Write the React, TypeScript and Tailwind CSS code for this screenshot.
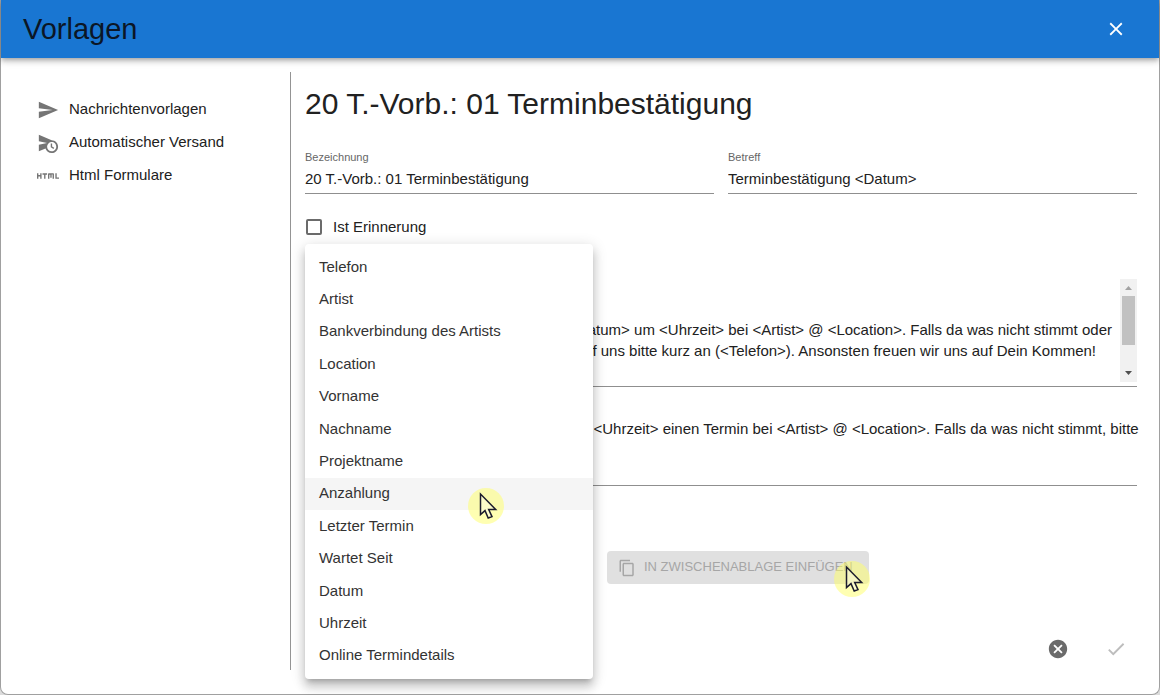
import React from "react";
import {
  MdCancel,
  MdCheck,
  MdClose,
  MdContentCopy,
  MdHtml,
  MdScheduleSend,
  MdSend,
} from "react-icons/md";

const placeholders = [
  "Telefon",
  "Artist",
  "Bankverbindung des Artists",
  "Location",
  "Vorname",
  "Nachname",
  "Projektname",
  "Anzahlung",
  "Letzter Termin",
  "Wartet Seit",
  "Datum",
  "Uhrzeit",
  "Online Termindetails",
];

const messageText =
  "Hallo <Vorname>,\n\nhiermit bestätige ich Deinen Termin am <Datum> um <Uhrzeit> bei <Artist> @ <Location>. Falls da was nicht stimmt oder Du diesen Termin nicht einhalten kannst, ruf uns bitte kurz an (<Telefon>). Ansonsten freuen wir uns auf Dein Kommen!\n\nBis bald\n\n<Artist>\n<Location>";

const smsText =
  "Hey <Vorname>, Du hast am <Datum> um <Uhrzeit> einen Termin bei <Artist> @ <Location>. Falls da was nicht stimmt, bitte kurz melden (<Telefon>).";

function Pointer() {
  return (
    <span className="block size-[36px] rounded-full bg-[#ffff66]/50">
      <svg viewBox="0 0 36 36" className="size-full" aria-hidden="true">
        <path
          d="M12.500 6V26.500L17 22.600L20.200 30L24 28.600L20.700 21.500H27.700Z"
          fill="#fff"
          fillOpacity="0.35"
          stroke="#1c1c2e"
          strokeWidth="1.5"
        />
      </svg>
    </span>
  );
}

function NavItem({ icon, children }: { icon: React.ReactNode; children: string }) {
  return (
    <a href="#" className="flex h-[33px] items-center gap-[10px] text-[#212121]">
      <span className="flex pt-[2px] text-[22px] text-[#757575]">{icon}</span>
      {children}
    </a>
  );
}

function TextField({ id, label, value }: { id: string; label: string; value: string }) {
  return (
    <div className="flex min-w-0 flex-1 flex-col">
      <label htmlFor={id} className="text-[11px] leading-4 text-[#666]">
        {label}
      </label>
      <input
        id={id}
        defaultValue={value}
        className="h-[29px] w-full border-b border-[#8f8f8f] bg-transparent pb-[2px] outline-none"
      />
    </div>
  );
}

function ScrollTrack() {
  return (
    <div className="flex h-[103px] w-[17px] shrink-0 flex-col items-center bg-[#f1f1f1]" aria-hidden="true">
      <svg viewBox="0 0 17 17" className="size-[17px]">
        <path d="M5 11h7L8.500 7z" fill="#a3a3a3" />
      </svg>
      <div className="h-[49px] w-[13px] bg-[#c1c1c1]" />
      <svg viewBox="0 0 17 17" className="mt-auto size-[17px]">
        <path d="M5 6h7L8.500 10z" fill="#505050" />
      </svg>
    </div>
  );
}

export default function App() {
  return (
    <div className="flex min-h-screen flex-col bg-[#dcdcdc] font-['Liberation_Sans',Arial,sans-serif] text-[15px] leading-[21px] text-[#212121]">
      <div className="flex flex-1 flex-col rounded-b-lg border-x border-b border-[#a0a0a0] bg-white">
        <header className="z-10 flex h-[58px] items-center justify-between bg-[#1976d2] pr-8 pl-[22px] shadow-[0_2px_4px_-1px_rgba(0,0,0,0.2),0_4px_5px_rgba(0,0,0,0.14),0_1px_10px_rgba(0,0,0,0.12)]">
          <h1 className="text-[29px] leading-[38px] text-[#0b1626]">Vorlagen</h1>
          <button type="button" aria-label="Schließen" className="text-[22px] text-white">
            <MdClose />
          </button>
        </header>

        <div className="flex flex-1 pt-[14px] pb-6">
          <nav className="flex w-[290px] shrink-0 flex-col border-r border-[#949494] pt-5 pl-9">
            <NavItem icon={<MdSend />}>Nachrichtenvorlagen</NavItem>
            <NavItem icon={<MdScheduleSend />}>Automatischer Versand</NavItem>
            <NavItem icon={<MdHtml />}>Html Formulare</NavItem>
          </nav>

          <main className="flex min-w-0 flex-1 flex-col pt-[13px] pr-[22px] pl-[14px]">
            <h2 className="text-[30px] leading-[38px]">20 T.-Vorb.: 01 Terminbestätigung</h2>

            <div className="mt-[26px] flex gap-[14px]">
              <TextField id="bezeichnung" label="Bezeichnung" value="20 T.-Vorb.: 01 Terminbestätigung" />
              <TextField id="betreff" label="Betreff" value="Terminbestätigung <Datum>" />
            </div>

            <label className="mt-[21px] flex h-6 items-center gap-[10px] self-start">
              <input
                type="checkbox"
                className="mx-px size-4 appearance-none rounded-[2px] border-2 border-[#6b6b6b]"
              />
              <span className="pb-[2px]">Ist Erinnerung</span>
            </label>

            <div className="mt-[38px] flex items-end border-b border-[#8f8f8f] pb-1">
              <textarea
                aria-label="Nachricht"
                defaultValue={messageText}
                className="h-[105px] min-w-0 flex-1 resize-none outline-none [scrollbar-width:none]"
              />
              <ScrollTrack />
            </div>

            <div className="mt-[31px] flex border-b border-[#8f8f8f]">
              <textarea
                aria-label="SMS"
                defaultValue={smsText}
                className="h-[67px] w-[calc(100%+8px)] shrink-0 resize-none outline-none [scrollbar-width:none]"
              />
            </div>

            <div className="relative mt-[65px] flex gap-[14px]">
              <button
                type="button"
                aria-haspopup="listbox"
                aria-label="Platzhalter"
                className="h-[33px] w-[288px] border-b border-[#8f8f8f]"
              />
              <div className="relative">
                <button
                  type="button"
                  disabled
                  className="flex h-[33px] items-center gap-2 rounded-[4px] bg-[#e0e0e0] pr-4 pl-[11px] text-[13px] text-[#a6a6a6]"
                >
                  <MdContentCopy className="text-[18px]" />
                  <span className="pb-[2px]">IN ZWISCHENABLAGE EINFÜGEN</span>
                </button>
                <div className="absolute -right-px top-[10px]">
                  <Pointer />
                </div>
              </div>

              <ul
                role="listbox"
                aria-label="Platzhalter"
                className="absolute -top-[307px] left-0 z-20 grid h-[435px] w-[288px] auto-rows-fr rounded-[4px] bg-white py-[7px] text-[#333] shadow-[0_5px_5px_-3px_rgba(0,0,0,0.2),0_8px_10px_1px_rgba(0,0,0,0.14),0_3px_14px_2px_rgba(0,0,0,0.12)]"
              >
                {placeholders.map((name) => (
                  <li
                    key={name}
                    role="option"
                    aria-selected={name === "Anzahlung"}
                    className="relative flex items-center px-[14px] pb-[2px] aria-selected:bg-[#f5f5f5]"
                  >
                    {name}
                    {name === "Anzahlung" && (
                      <div className="absolute top-[10px] left-[163px] z-10">
                        <Pointer />
                      </div>
                    )}
                  </li>
                ))}
              </ul>
            </div>

            <div className="mt-auto flex justify-end gap-9 pr-[10px] pb-[10px] text-[22px]">
              <button type="button" aria-label="Abbrechen" className="text-[#6b6b6b]">
                <MdCancel />
              </button>
              <button type="button" disabled aria-label="Speichern" className="text-[#bdbdbd]">
                <MdCheck />
              </button>
            </div>
          </main>
        </div>
      </div>
    </div>
  );
}
